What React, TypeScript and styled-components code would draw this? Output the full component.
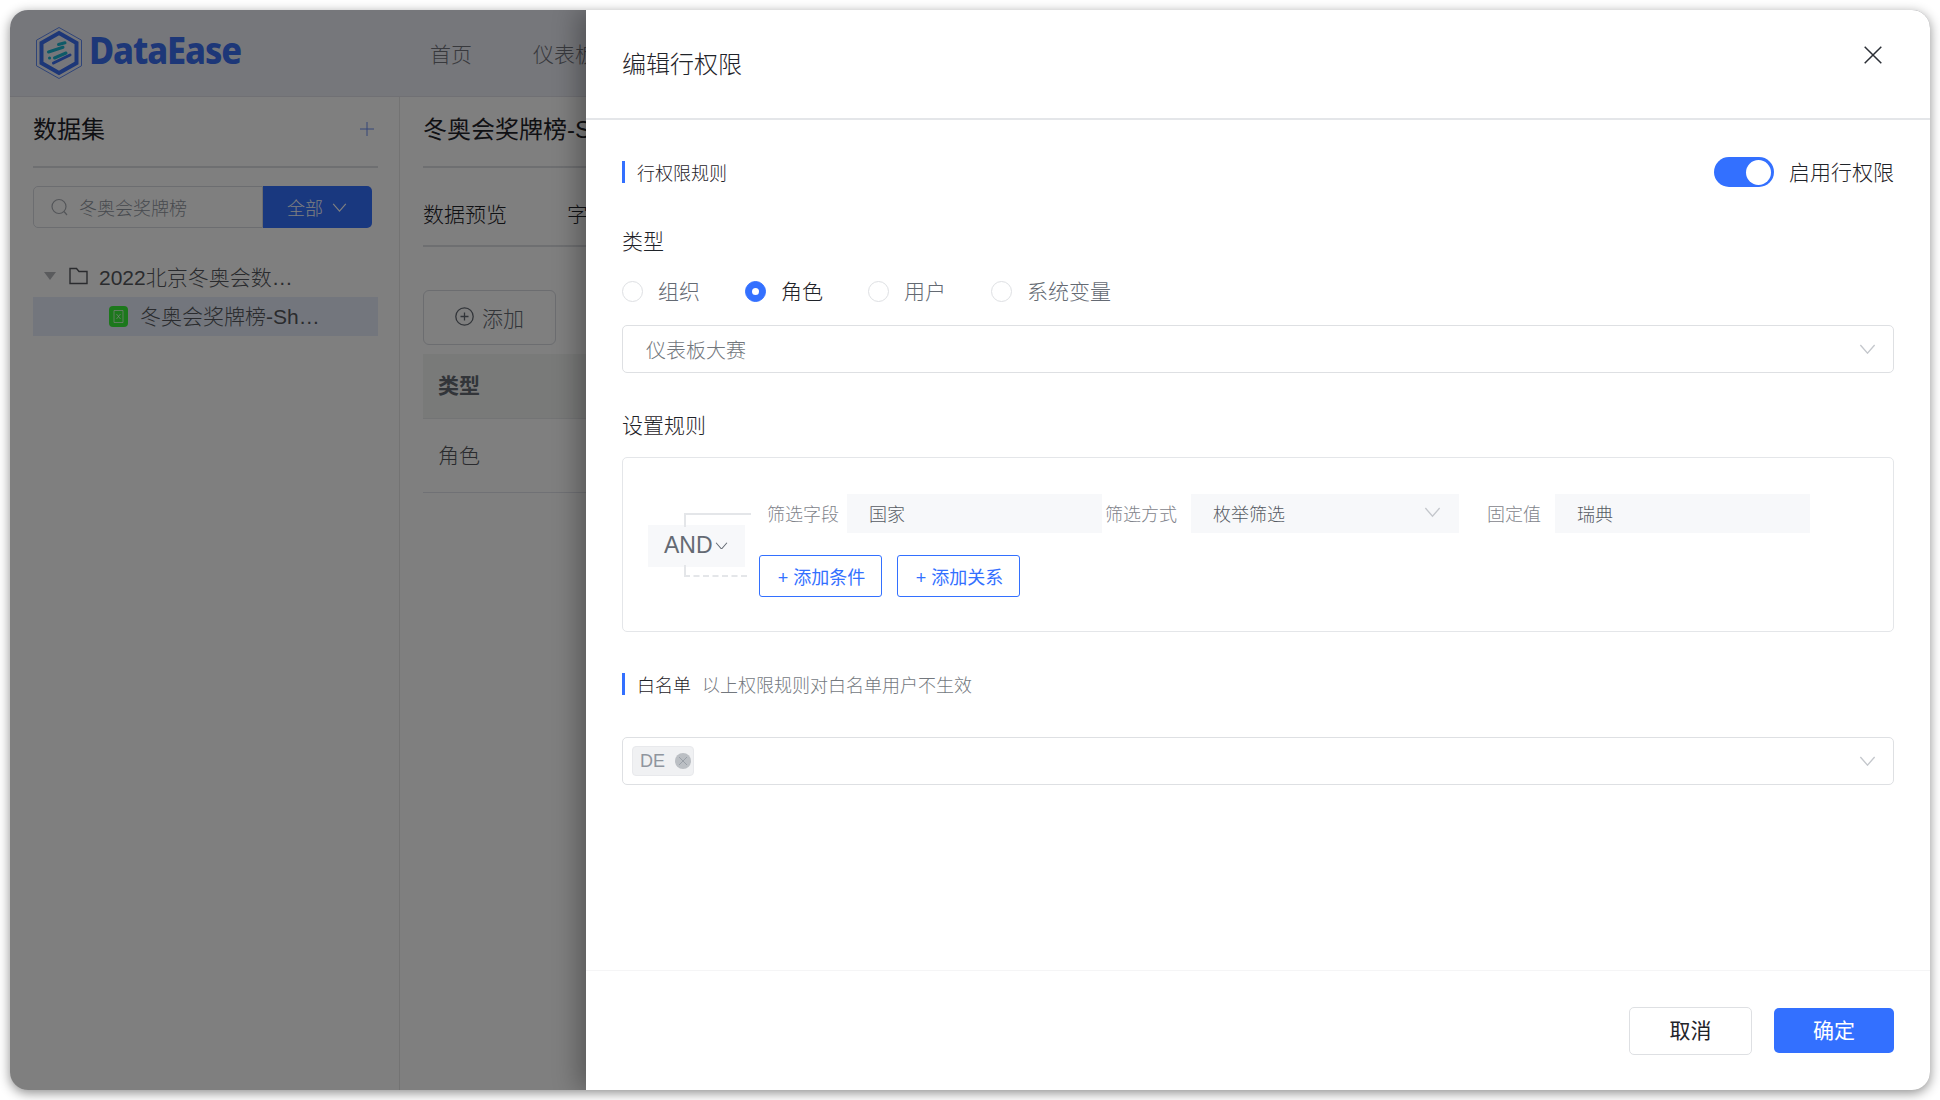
import React from 'react'
import styled, { createGlobalStyle } from 'styled-components'

const GlobalStyle = createGlobalStyle`
  html, body {
    margin: 0;
    padding: 0;
    background: #ffffff;
    overflow: hidden;
  }
  * {
    box-sizing: border-box;
  }
  body {
    font-family: "Liberation Sans", "Noto Sans CJK SC", sans-serif;
    font-weight: 300;
    color: #1f2329;
  }
`

const Page = styled.div`
  width: 1940px;
  height: 1100px;
  padding: 10px;
`

const Window = styled.div`
  position: relative;
  width: 1920px;
  height: 1080px;
  display: flex;
  flex-direction: column;
  background: #ffffff;
  border-radius: 18px;
  overflow: hidden;
  box-shadow: 0 3px 12px rgba(0, 0, 0, 0.45);
`

const TopBar = styled.header`
  height: 87px;
  flex-shrink: 0;
  display: flex;
  align-items: center;
  padding-left: 26px;
  background: #edeef6;
  border-bottom: 1px solid #e0e1e8;
`

const LogoText = styled.span`
  margin-left: 7px;
  padding-bottom: 8px;
  width: 152px;
  font-family: "Noto Sans", sans-serif;
  font-size: 37px;
  font-weight: 800;
  letter-spacing: -1.2px;
  line-height: 1;
  color: #3a6ef0;
  white-space: nowrap;
  transform: scaleX(0.93);
  transform-origin: left center;
`

const Nav = styled.nav`
  display: flex;
  gap: 61px;
  margin-left: 189px;
  font-size: 21px;
  color: #70727a;
`

const Main = styled.div`
  flex: 1;
  display: flex;
  min-height: 0;
`

const Sidebar = styled.aside`
  width: 390px;
  flex-shrink: 0;
  padding-left: 23px;
  padding-right: 21px;
  border-right: 1px solid #e6e6e6;
`

const PaneTitle = styled.div`
  height: 71px;
  padding: 0 4px 9px 0;
  display: flex;
  align-items: center;
  justify-content: space-between;
  font-size: 24px;
  font-weight: 400;
  white-space: nowrap;
  border-bottom: 2px solid #dcdee2;
`

const SearchRow = styled.div`
  margin-top: 18px;
  display: flex;
  height: 42px;
`

const SearchBox = styled.div`
  width: 230px;
  display: flex;
  align-items: center;
  gap: 11px;
  padding-left: 17px;
  font-size: 18px;
  color: #8f959e;
  background: #ffffff;
  border: 1px solid #d8dae0;
  border-radius: 5px 0 0 5px;
`

const FilterButton = styled.div`
  width: 109px;
  display: flex;
  align-items: center;
  justify-content: flex-start;
  gap: 9px;
  padding-left: 24px;
  font-size: 18px;
  color: #ffffff;
  background: #3370ff;
  border-radius: 0 5px 5px 0;
`

const TreeList = styled.div`
  margin-top: 29px;
`

const TreeRow = styled.div<{ $selected?: boolean }>`
  display: flex;
  align-items: center;
  height: ${({ $selected }) => ($selected ? '39px' : '40px')};
  padding-left: ${({ $selected }) => ($selected ? '76px' : '11px')};
  padding-bottom: ${({ $selected }) => ($selected ? '4px' : '3px')};
  font-size: 21px;
  color: #54575c;
  white-space: nowrap;
  background: ${({ $selected }) => ($selected ? '#e6edfa' : 'transparent')};
`

const Caret = styled.span`
  width: 0;
  height: 0;
  margin-right: 13px;
  border-left: 6px solid transparent;
  border-right: 6px solid transparent;
  border-top: 8px solid #b4b6bb;
`

const FolderWrap = styled.span`
  display: flex;
  margin-right: 11px;
`

const SheetIcon = styled.span`
  display: flex;
  margin-top: 4px;
  margin-right: 12px;
`

const Content = styled.section`
  flex: 1;
  min-width: 0;
  padding-left: 23px;
`

const Tabs = styled.div`
  margin-top: 30px;
  height: 49px;
  padding-bottom: 13px;
  display: flex;
  gap: 60px;
  font-size: 21px;
  border-bottom: 2px solid #dcdee2;
`

const AddButton = styled.div`
  margin-top: 43px;
  width: 133px;
  height: 55px;
  display: flex;
  align-items: center;
  justify-content: center;
  gap: 8px;
  padding-bottom: 2px;
  font-size: 21px;
  color: #646a73;
  border: 1px solid #d8dae0;
  border-radius: 6px;
`

const TableHead = styled.div`
  margin-top: 9px;
  height: 65px;
  display: flex;
  align-items: center;
  padding: 0 0 4px 15px;
  font-size: 21px;
  font-weight: 700;
  color: #646a73;
  background: #f2f4f2;
  border-bottom: 1px solid #e6e8eb;
`

const TableRow = styled.div`
  height: 74px;
  display: flex;
  align-items: center;
  padding: 0 0 4px 15px;
  font-size: 21px;
  color: #54575c;
  border-bottom: 1px solid #e0e2ea;
`

const Overlay = styled.div`
  position: absolute;
  inset: 0;
  background: rgba(0, 0, 0, 0.5);
`

const Drawer = styled.div`
  position: absolute;
  top: 0;
  right: 0;
  bottom: 0;
  width: 1344px;
  display: flex;
  flex-direction: column;
  background: #ffffff;
  box-shadow: -8px 0 24px rgba(0, 0, 0, 0.3);
`

const DrawerHeader = styled.div`
  height: 110px;
  flex-shrink: 0;
  display: flex;
  justify-content: space-between;
  padding: 36px 48px 0 36px;
  border-bottom: 2px solid #e4e6e9;
`

const DrawerTitle = styled.div`
  font-size: 24px;
  line-height: 38px;
  color: #1f2329;
`

const CloseIcon = styled.span`
  display: flex;
  height: 18px;
`

const DrawerBody = styled.div`
  flex: 1;
  padding: 0 36px;
`

const SectionRow = styled.div<{ $top: number }>`
  height: 30px;
  margin-top: ${({ $top }) => $top}px;
  display: flex;
  align-items: center;
  justify-content: space-between;
`

const SectionTitle = styled.div`
  display: flex;
  align-items: center;
  height: 22px;
  padding-left: 12px;
  font-size: 18px;
  color: #1f2329;
  border-left: 3px solid #3370ff;
`

const SectionHint = styled.span`
  margin-left: 11px;
  color: #73787e;
`

const ToggleRow = styled.div`
  display: flex;
  align-items: center;
  gap: 15px;
  padding-bottom: 2px;
  font-size: 21px;
  color: #1f2329;
`

const Toggle = styled.span`
  width: 60px;
  height: 30px;
  margin-top: 2px;
  display: flex;
  align-items: center;
  justify-content: flex-end;
  padding-right: 3px;
  background: #3370ff;
  border-radius: 15px;

  &::after {
    content: '';
    width: 25px;
    height: 25px;
    background: #ffffff;
    border-radius: 50%;
  }
`

const FieldLabel = styled.div<{ $top: number }>`
  height: 30px;
  margin-top: ${({ $top }) => $top}px;
  font-size: 21px;
  line-height: 30px;
  color: #1f2329;
`

const RadioRow = styled.div`
  height: 30px;
  margin-top: 18px;
  display: flex;
  align-items: center;
  gap: 45px;
`

const RadioItem = styled.label<{ $checked?: boolean }>`
  display: flex;
  align-items: center;
  gap: 15px;
  font-size: 21px;
  color: ${({ $checked }) => ($checked ? '#1f2329' : '#646a73')};
`

const RadioDot = styled.span<{ $checked?: boolean }>`
  width: 21px;
  height: 21px;
  margin-top: 2px;
  display: flex;
  align-items: center;
  justify-content: center;
  border-radius: 50%;
  border: 1px solid ${({ $checked }) => ($checked ? '#3370ff' : '#dee0e3')};
  background: ${({ $checked }) => ($checked ? '#3370ff' : '#ffffff')};

  &::after {
    content: '';
    width: 7px;
    height: 7px;
    border-radius: 50%;
    background: ${({ $checked }) => ($checked ? '#ffffff' : 'transparent')};
  }
`

const SelectBox = styled.div<{ $top: number; $tight?: boolean }>`
  height: 48px;
  margin-top: ${({ $top }) => $top}px;
  display: flex;
  align-items: center;
  justify-content: space-between;
  padding: ${({ $tight }) => ($tight ? '0 17px 0 9px' : '0 17px 0 23px')};
  font-size: 20px;
  color: #71767c;
  border: 1px solid #dee0e3;
  border-radius: 5px;
`

const Tag = styled.span`
  width: 62px;
  height: 30px;
  display: flex;
  align-items: center;
  gap: 10px;
  padding-left: 7px;
  font-size: 18px;
  color: #8f959e;
  background: #f0f1f3;
  border: 1px solid #e8e9ec;
  border-radius: 4px;
`

const TagClose = styled.span`
  width: 16px;
  height: 16px;
  display: flex;
  align-items: center;
  justify-content: center;
  background: #bbbfc4;
  border-radius: 50%;
`

const RuleBox = styled.div`
  height: 175px;
  margin-top: 16px;
  padding: 36px 0 0 25px;
  display: flex;
  align-items: flex-start;
  border: 1px solid #e4e6e9;
  border-radius: 5px;
`

const LogicColumn = styled.div`
  width: 111px;
  height: 103px;
  flex-shrink: 0;
  display: flex;
  align-items: center;
`

const LogicBox = styled.div`
  position: relative;
  width: 97px;
  height: 42px;
  display: flex;
  align-items: center;
  gap: 2px;
  padding-left: 16px;
  font-size: 23px;
  color: #646a73;
  background: #f7f8fa;

  &::before {
    content: '';
    position: absolute;
    left: 36px;
    top: -12px;
    width: 65px;
    height: 12px;
    border-left: 2px solid #e4e6e9;
    border-top: 2px solid #e4e6e9;
  }

  &::after {
    content: '';
    position: absolute;
    left: 36px;
    bottom: -10px;
    width: 61px;
    height: 10px;
    border-left: 2px dashed #e4e6e9;
    border-bottom: 2px dashed #e4e6e9;
  }
`

const RuleColumn = styled.div`
  display: flex;
  flex-direction: column;
  gap: 22px;
`

const RuleRow = styled.div`
  height: 39px;
  padding-left: 8px;
  display: flex;
  align-items: center;
`

const RuleLabel = styled.span<{ $left?: number; $right: number }>`
  margin-left: ${({ $left }) => $left ?? 0}px;
  margin-right: ${({ $right }) => $right}px;
  padding-bottom: 2px;
  font-size: 18px;
  color: #7f848b;
  white-space: nowrap;
`

const RuleInput = styled.div<{ $width: number }>`
  width: ${({ $width }) => $width}px;
  height: 39px;
  display: flex;
  align-items: center;
  justify-content: space-between;
  padding: 0 18px 2px 22px;
  font-size: 18px;
  color: #565b63;
  background: #f7f8fa;
`

const ActionRow = styled.div`
  display: flex;
  gap: 15px;
`

const OutlineButton = styled.div`
  width: 123px;
  height: 42px;
  display: flex;
  align-items: center;
  justify-content: center;
  gap: 5px;
  padding-left: 2px;
  font-size: 18px;
  font-weight: 400;
  color: #3370ff;
  border: 1.5px solid #3370ff;
  border-radius: 3px;
`

const DrawerFooter = styled.div`
  height: 120px;
  flex-shrink: 0;
  display: flex;
  align-items: center;
  justify-content: flex-end;
  gap: 22px;
  padding-right: 36px;
  border-top: 1px solid #f5f5f6;
`

const FooterButton = styled.div<{ $primary?: boolean }>`
  width: ${({ $primary }) => ($primary ? '120px' : '123px')};
  height: ${({ $primary }) => ($primary ? '45px' : '48px')};
  display: flex;
  align-items: center;
  justify-content: center;
  padding-bottom: 3px;
  font-size: 21px;
  font-weight: 400;
  color: ${({ $primary }) => ($primary ? '#ffffff' : '#1f2329')};
  background: ${({ $primary }) => ($primary ? '#3370ff' : '#ffffff')};
  border: ${({ $primary }) => ($primary ? 'none' : '1px solid #dee0e3')};
  border-radius: 5px;
`

const PlusGlyph = styled.svg`
  margin-top: 4px;
`

const Chevron = ({ size = 17, color = '#c4c7cc' }: { size?: number; color?: string }) => (
  <svg width={size} height={size * 0.6} viewBox="0 0 16 10" fill="none">
    <path d="M1 1 L8 9 L15 1" stroke={color} strokeWidth="1.3" />
  </svg>
)

const Logo = () => (
  <svg width="46" height="52" viewBox="0 0 46 52" fill="none">
    <path d="M23 .5 45.5 13.2V38.8L23 51.5.5 38.8V13.2Z" stroke="#3a6ef0" strokeWidth=".8" />
    <path d="M23 6 40.5 16V36L23 46 5.5 36V16Z" stroke="#3a6ef0" strokeWidth="4" />
    <g strokeWidth="3" strokeLinecap="round">
      <path d="M22.5 17.5 29 15.8" stroke="#1cb4d0" />
      <path d="M12.5 25 27 20.3" stroke="#1cb4d0" />
      <path d="M13.5 31h.1" stroke="#1cb4d0" />
      <path d="M18.5 31 30 26" stroke="#1cb4d0" />
      <path d="M17.5 36 34 28" stroke="#3a6ef0" />
    </g>
  </svg>
)

const Plus = () => (
  <PlusGlyph width="14" height="16" viewBox="0 0 14 16" fill="none">
    <path d="M7 1V15M0 8H14" stroke="#6a8cf0" strokeWidth="1" />
  </PlusGlyph>
)

const SearchIcon = () => (
  <svg width="17" height="18" viewBox="0 0 17 18" fill="none">
    <circle cx="8" cy="8.5" r="7" stroke="#a8acb3" strokeWidth="1.2" />
    <path d="M13 13.5 16 17" stroke="#a8acb3" strokeWidth="1.2" />
  </svg>
)

const FolderIcon = () => (
  <svg width="19" height="18" viewBox="0 0 19 18" fill="none">
    <path d="M1 16.5V1.5H7.5L10 4.5H18V16.5Z" stroke="#54575c" strokeWidth="1.4" />
  </svg>
)

const ExcelIcon = () => (
  <svg width="19" height="21" viewBox="0 0 19 21" fill="none">
    <rect width="19" height="21" rx="4" fill="#38f038" />
    <path d="M5 4.5H14V16.5H5Z" stroke="#ffffff" strokeWidth=".9" opacity=".75" />
    <path d="M7.5 8 11.5 13M11.5 8 7.5 13" stroke="#ffffff" strokeWidth=".9" opacity=".75" />
  </svg>
)

const AddCircle = () => (
  <svg width="19" height="19" viewBox="0 0 19 19" fill="none">
    <circle cx="9.5" cy="9.5" r="8.7" stroke="#646a73" strokeWidth="1.3" />
    <path d="M9.5 5.5V13.5M5.5 9.5H13.5" stroke="#646a73" strokeWidth="1.3" />
  </svg>
)

const CloseGlyph = () => (
  <svg width="18" height="18" viewBox="0 0 18 18" fill="none">
    <path d="M.7.7 17.3 17.3M17.3.7.7 17.3" stroke="#2b2f36" strokeWidth="1.5" />
  </svg>
)

const TagCloseGlyph = () => (
  <svg width="10" height="10" viewBox="0 0 10 10" fill="none">
    <path d="M1 1 9 9M9 1 1 9" stroke="#9aa0a8" strokeWidth="1" />
  </svg>
)

const radios = [
  { label: '组织' },
  { label: '角色', checked: true },
  { label: '用户' },
  { label: '系统变量' },
]

export default function App() {
  return (
    <>
      <GlobalStyle />
      <Page>
        <Window>
          <TopBar>
            <Logo />
            <LogoText>DataEase</LogoText>
            <Nav>
              <span>首页</span>
              <span>仪表板</span>
            </Nav>
          </TopBar>
          <Main>
            <Sidebar>
              <PaneTitle>
                <span>数据集</span>
                <Plus />
              </PaneTitle>
              <SearchRow>
                <SearchBox>
                  <SearchIcon />
                  冬奥会奖牌榜
                </SearchBox>
                <FilterButton>
                  全部
                  <Chevron size={15} color="#ffffff" />
                </FilterButton>
              </SearchRow>
              <TreeList>
                <TreeRow>
                  <Caret />
                  <FolderWrap>
                    <FolderIcon />
                  </FolderWrap>
                  2022北京冬奥会数…
                </TreeRow>
                <TreeRow $selected>
                  <SheetIcon>
                    <ExcelIcon />
                  </SheetIcon>
                  冬奥会奖牌榜-Sh…
                </TreeRow>
              </TreeList>
            </Sidebar>
            <Content>
              <PaneTitle>冬奥会奖牌榜-Sheet1</PaneTitle>
              <Tabs>
                <span>数据预览</span>
                <span>字段管理</span>
              </Tabs>
              <AddButton>
                <AddCircle />
                添加
              </AddButton>
              <TableHead>类型</TableHead>
              <TableRow>角色</TableRow>
            </Content>
          </Main>
          <Overlay />
          <Drawer>
            <DrawerHeader>
              <DrawerTitle>编辑行权限</DrawerTitle>
              <CloseIcon>
                <CloseGlyph />
              </CloseIcon>
            </DrawerHeader>
            <DrawerBody>
              <SectionRow $top={37}>
                <SectionTitle>行权限规则</SectionTitle>
                <ToggleRow>
                  <Toggle />
                  启用行权限
                </ToggleRow>
              </SectionRow>
              <FieldLabel $top={40}>类型</FieldLabel>
              <RadioRow>
                {radios.map((radio) => (
                  <RadioItem key={radio.label} $checked={radio.checked}>
                    <RadioDot $checked={radio.checked} />
                    {radio.label}
                  </RadioItem>
                ))}
              </RadioRow>
              <SelectBox $top={20}>
                仪表板大赛
                <Chevron />
              </SelectBox>
              <FieldLabel $top={38}>设置规则</FieldLabel>
              <RuleBox>
                <LogicColumn>
                  <LogicBox>
                    AND
                    <Chevron size={13} color="#646a73" />
                  </LogicBox>
                </LogicColumn>
                <RuleColumn>
                  <RuleRow>
                    <RuleLabel $right={8}>筛选字段</RuleLabel>
                    <RuleInput $width={255}>国家</RuleInput>
                    <RuleLabel $left={3} $right={14}>筛选方式</RuleLabel>
                    <RuleInput $width={268}>
                      枚举筛选
                      <Chevron />
                    </RuleInput>
                    <RuleLabel $left={28} $right={14}>固定值</RuleLabel>
                    <RuleInput $width={255}>瑞典</RuleInput>
                  </RuleRow>
                  <ActionRow>
                    <OutlineButton>+ 添加条件</OutlineButton>
                    <OutlineButton>+ 添加关系</OutlineButton>
                  </ActionRow>
                </RuleColumn>
              </RuleBox>
              <SectionRow $top={37}>
                <SectionTitle>
                  白名单
                  <SectionHint>以上权限规则对白名单用户不生效</SectionHint>
                </SectionTitle>
              </SectionRow>
              <SelectBox $top={38} $tight>
                <Tag>
                  DE
                  <TagClose>
                    <TagCloseGlyph />
                  </TagClose>
                </Tag>
                <Chevron />
              </SelectBox>
            </DrawerBody>
            <DrawerFooter>
              <FooterButton>取消</FooterButton>
              <FooterButton $primary>确定</FooterButton>
            </DrawerFooter>
          </Drawer>
        </Window>
      </Page>
    </>
  )
}
